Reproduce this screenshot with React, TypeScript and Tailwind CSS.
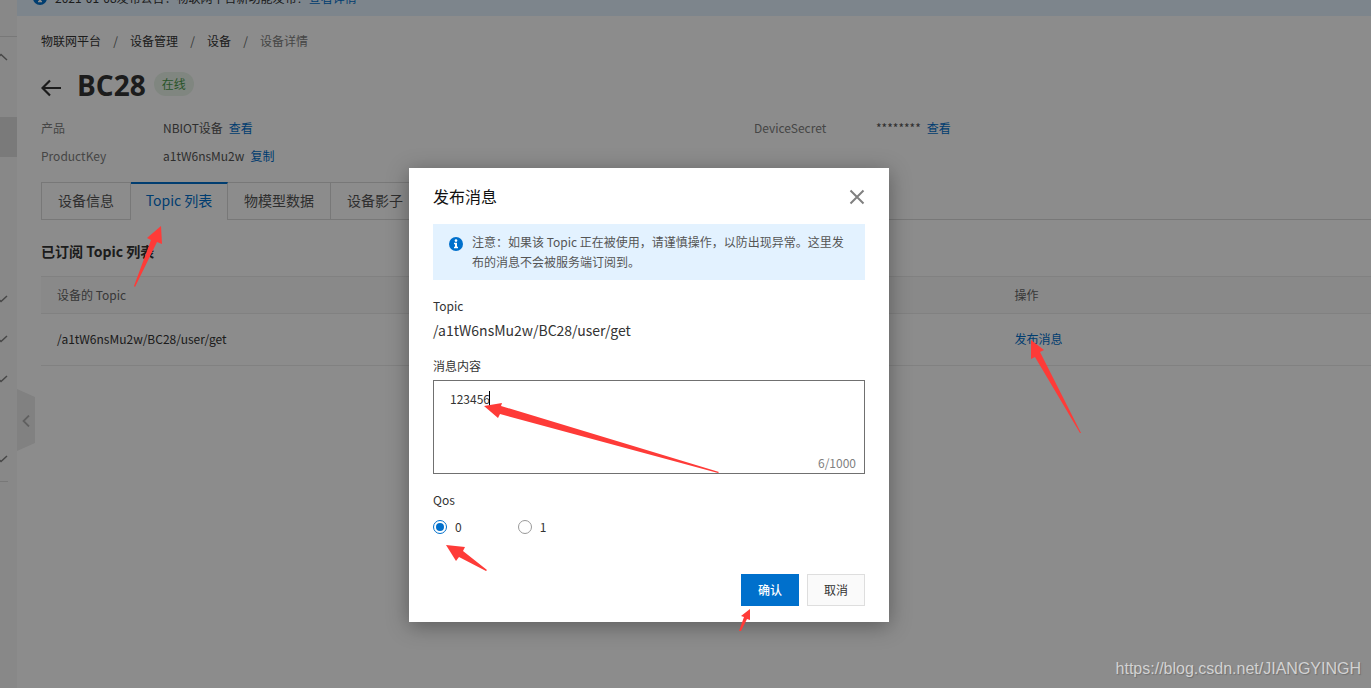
import { useState } from "react";

const sideRows = ["none", "active", "none", "none", "none", "down", "down", "down", "none", "down"];

const tabs = ["设备信息", "Topic 列表", "物模型数据", "设备影子"];

function InfoIcon() {
  return (
    <svg className="h-3.5 w-3.5 shrink-0" viewBox="0 0 14 14" aria-hidden="true">
      <circle cx="7" cy="7" r="7" fill="#0070cc" />
      <circle cx="7" cy="3.6" r="1.3" fill="#fff" />
      <path d="M5 5.8h3v4h1v1.4H5V9.8h1V7.2H5z" fill="#fff" />
    </svg>
  );
}

function SideChevron({ up = false }: { up?: boolean }) {
  return (
    <svg className="h-2 w-2" viewBox="0 0 8 8" fill="none" stroke="#808080" strokeWidth="1.5" aria-hidden="true">
      <path d={up ? "M-5 7L1 1.500L7 7" : "M-5 1L1 6.500L7 1"} />
    </svg>
  );
}

function Sidebar() {
  return (
    <aside className="w-[17px] shrink-0 bg-[#f7f7f7]">
      <div className="h-[37px] border-b border-[#dadada]" />
      <div className="flex h-10 items-center">
        <SideChevron up />
      </div>
      <div className="flex flex-col">
        {sideRows.map((row, i) => (
          <div key={i} className={row === "active" ? "h-10 bg-[#dedede]" : "flex h-10 items-center pt-1"}>
            {row === "down" && <SideChevron />}
          </div>
        ))}
      </div>
      <div className="mt-1 w-2 border-t border-[#dadada]" />
    </aside>
  );
}

function Breadcrumb() {
  return (
    <nav className="flex h-5 items-center text-xs text-[#333]" aria-label="breadcrumb">
      <a href="#platform">物联网平台</a>
      <span className="w-[29px] text-center text-[#666]">/</span>
      <a href="#manage">设备管理</a>
      <span className="w-[29px] text-center text-[#666]">/</span>
      <a href="#devices">设备</a>
      <span className="w-[29px] text-center text-[#666]">/</span>
      <span className="text-[#808080]">设备详情</span>
    </nav>
  );
}

function InfoRow({ label, value, action }: { label: string; value: string; action: string }) {
  return (
    <div className="flex h-7 items-center">
      <dt className="w-[122px] text-[#808080]">{label}</dt>
      <dd className="flex gap-1.5 text-[#555]">
        <span>{value}</span>
        <a href="#action" className="text-[#0070cc]">{action}</a>
      </dd>
    </div>
  );
}

function DevicePage() {
  return (
    <main className="min-w-0 flex-1 bg-white">
      <div className="flex h-4 flex-col justify-end overflow-hidden bg-[#e3f2ff]">
        <div className="flex h-9 shrink-0 items-center gap-2 pl-4 text-xs text-[#333]">
          <InfoIcon />
          <p>
            2021-01-08发布公告：物联网平台新功能发布！
            <a href="#notice" className="text-[#0070cc]">查看详情</a>
          </p>
        </div>
      </div>
      <div className="pt-[15px] pl-6">
        <Breadcrumb />
        <div className="mt-3 flex h-11 items-center">
          <button type="button" aria-label="返回" className="mt-1.5 mr-4">
            <svg className="h-5 w-5" viewBox="0 0 20 20" fill="none" stroke="#333" strokeWidth="2.2" aria-hidden="true">
              <path d="M20 10H1.500M9 2.500L1.500 10L9 17.500" />
            </svg>
          </button>
          <h1 className="font-['Open_Sans',sans-serif] text-[28px] leading-10 font-bold text-[#333]">BC28</h1>
          <span className="mb-0.5 ml-2 h-6 rounded-full bg-[#e9f5e9] px-2 text-xs leading-6 text-[#4c9a4c]">在线</span>
        </div>
        <dl className="mt-[7px] grid grid-cols-[713fr_617fr] text-xs">
          <InfoRow label="产品" value="NBIOT设备" action="查看" />
          <InfoRow label="DeviceSecret" value="********" action="查看" />
          <InfoRow label="ProductKey" value="a1tW6nsMu2w" action="复制" />
        </dl>
        <div role="tablist" className="mt-3 flex h-[38px] border-b border-[#dadada] text-sm">
          {tabs.map((tab, i) => (
            <button
              key={tab}
              type="button"
              role="tab"
              aria-selected={i === 1}
              className={
                i === 1
                  ? "h-[38px] w-[97px] border-t-2 border-r border-t-[#0070cc] border-r-[#dadada] bg-white pb-1 text-center text-[#0070cc]"
                  : i === 0
                    ? "border-t border-r border-l border-[#dadada] px-4 pb-0.5 text-[#555]"
                    : "border-t border-r border-[#dadada] px-4 pb-0.5 text-[#555]"
              }
            >
              {tab}
            </button>
          ))}
        </div>
        <h2 className="mt-[21px] text-sm leading-5 font-bold text-[#333]">已订阅 Topic 列表</h2>
        <table className="mt-[15px] w-full border-collapse text-left text-xs">
          <thead>
            <tr className="h-[37px] border-y border-[#ebebeb] bg-[#fafafa] text-[#666]">
              <th className="w-[72%] px-4 font-normal">设备的 Topic</th>
              <th className="px-4 font-normal">操作</th>
            </tr>
          </thead>
          <tbody>
            <tr className="h-[52px] border-b border-[#ebebeb] text-[#333]">
              <td className="px-4 pb-0.5">/a1tW6nsMu2w/BC28/user/get</td>
              <td className="px-4 pb-0.5">
                <a href="#publish" className="text-[#0070cc]">发布消息</a>
              </td>
            </tr>
          </tbody>
        </table>
      </div>
    </main>
  );
}

function PublishDialog() {
  const [message, setMessage] = useState("123456");
  const [qos, setQos] = useState("0");

  return (
    <div
      role="dialog"
      aria-modal="true"
      aria-labelledby="dialog-title"
      className="w-[480px] bg-white px-6 py-4 text-xs text-[#333] shadow-[0_4px_20px_rgba(0,0,0,0.35)]"
    >
      <div className="flex h-6 items-center justify-between">
        <h2 id="dialog-title" className="text-base text-[#111]">发布消息</h2>
        <button type="button" aria-label="关闭">
          <svg className="mt-0.5 h-4 w-4" viewBox="0 0 16 16" fill="none" stroke="#808080" strokeWidth="2" aria-hidden="true">
            <path d="M1.500 1.500L14.500 14.500M14.500 1.500L1.500 14.500" />
          </svg>
        </button>
      </div>
      <div className="mt-4 flex gap-[9px] bg-[#e3f2ff] px-4 py-2 leading-5 text-[#555]">
        <span className="pt-[5px]">
          <InfoIcon />
        </span>
        <p>注意：如果该 Topic 正在被使用，请谨慎操作，以防出现异常。这里发布的消息不会被服务端订阅到。</p>
      </div>
      <p className="mt-4 leading-5">Topic</p>
      <p className="mt-1 text-sm leading-5">/a1tW6nsMu2w/BC28/user/get</p>
      <label htmlFor="message" className="mt-4 block leading-5">消息内容</label>
      <div className="relative mt-1 border border-[#707070]">
        <textarea
          id="message"
          value={message}
          onChange={(e) => setMessage(e.target.value)}
          className="block h-[92px] w-full resize-none px-4 py-2 leading-5 outline-none"
        />
        <span className="absolute top-2.5 left-[55px] h-4 w-px bg-black" />
        <span className="absolute right-2 bottom-0 leading-5 text-[#808080]">{message.length}/1000</span>
      </div>
      <fieldset className="mt-4">
        <legend className="leading-5">Qos</legend>
        <div className="mt-[7px] flex gap-14">
          {["0", "1"].map((level) => (
            <label key={level} className="flex items-center gap-2 leading-5">
              <input
                type="radio"
                name="qos"
                value={level}
                checked={qos === level}
                onChange={() => setQos(level)}
                className="h-3.5 w-3.5 appearance-none rounded-full border border-[#999] bg-white bg-clip-content p-0.5 checked:border-[#0070cc] checked:bg-[#0070cc]"
              />
              {level}
            </label>
          ))}
        </div>
      </fieldset>
      <div className="mt-[37px] flex justify-end gap-2">
        <button type="button" className="h-8 w-[58px] bg-[#0070cc] font-medium text-white">确认</button>
        <button type="button" className="h-8 w-[58px] border border-[#dedede] bg-[#fafafa]">取消</button>
      </div>
    </div>
  );
}

function Arrows() {
  return (
    <svg className="pointer-events-none absolute inset-0 h-full w-full" fill="#fe3b38" aria-hidden="true">
      <path d="M161 226L147 238L151 240L134 286L135 287L157 242L162 244Z" />
      <path d="M1031 340L1031 359L1035 357L1080 433L1081 433L1040 352L1044 350Z" />
      <path d="M484 406L498 418L500 414L718 473L719 472L501 406L502 403Z" />
      <path d="M446 545L456 561L459 557L486 571L487 570L463 551L465 547Z" />
      <path d="M750 609L741 616L744 617L739 631L741 631L747 619L750 620Z" />
    </svg>
  );
}

export default function App() {
  return (
    <div className="relative min-h-screen overflow-hidden font-['Noto_Sans_CJK_SC',sans-serif]">
      <div className="relative flex min-h-screen">
        <Sidebar />
        <DevicePage />
        <button
          type="button"
          aria-label="收起"
          className="absolute top-[389px] left-[17px] flex h-[62px] w-[18px] items-center justify-center bg-[#ebebeb] pt-0.5 [clip-path:polygon(0_0,100%_8px,100%_54px,0_100%)]"
        >
          <svg className="h-3 w-2" viewBox="0 0 8 12" fill="none" stroke="#b0b0b0" strokeWidth="1.8" aria-hidden="true">
            <path d="M7 0.500L1.500 6L7 11.500" />
          </svg>
        </button>
      </div>
      <div className="absolute inset-0 flex items-start justify-center bg-black/45 pt-[168px] pr-[73px]">
        <PublishDialog />
      </div>
      <Arrows />
      <p className="absolute right-2.5 bottom-[7px] font-['Liberation_Sans',sans-serif] text-base text-[#d2d2d2] [text-shadow:1px_1px_1px_#707070]">
        https://blog.csdn.net/JIANGYINGH
      </p>
    </div>
  );
}
